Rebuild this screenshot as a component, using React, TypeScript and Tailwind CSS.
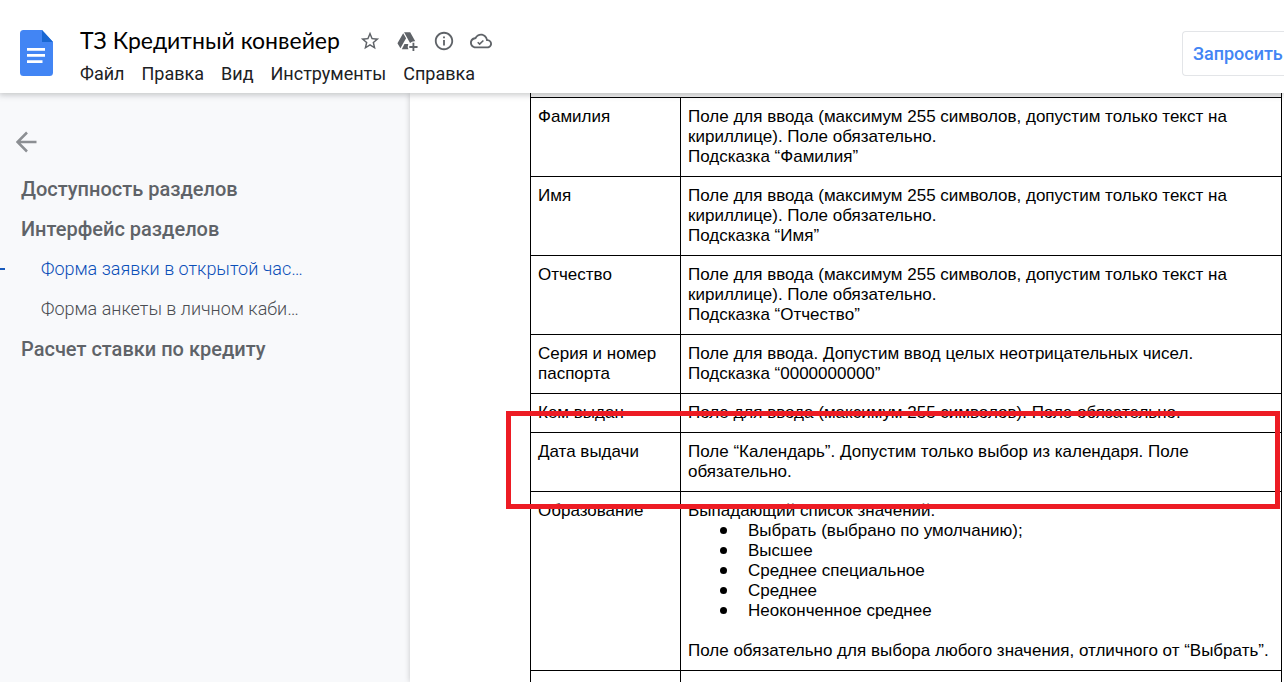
import type { ReactNode } from 'react';

const outline = [
  { text: 'Доступность разделов', level: 1 },
  { text: 'Интерфейс разделов', level: 1 },
  { text: 'Форма заявки в открытой час…', level: 2, active: true },
  { text: 'Форма анкеты в личном каби…', level: 2 },
  { text: 'Расчет ставки по кредиту', level: 1 },
];

const menu = ['Файл', 'Правка', 'Вид', 'Инструменты', 'Справка'];

const options = [
  'Выбрать (выбрано по умолчанию);',
  'Высшее',
  'Среднее специальное',
  'Среднее',
  'Неоконченное среднее',
];

const nameField = (hint: string) => (
  <>
    <p>Поле для ввода (максимум 255 символов, допустим только текст на кириллице). Поле обязательно.</p>
    <p>Подсказка “{hint}”</p>
  </>
);

const rows: { name: string; body: ReactNode }[] = [
  { name: 'Фамилия', body: nameField('Фамилия') },
  { name: 'Имя', body: nameField('Имя') },
  { name: 'Отчество', body: nameField('Отчество') },
  {
    name: 'Серия и номер паспорта',
    body: (
      <>
        <p>Поле для ввода. Допустим ввод целых неотрицательных чисел.</p>
        <p>Подсказка “0000000000”</p>
      </>
    ),
  },
  { name: 'Кем выдан', body: <p>Поле для ввода (максимум 255 символов). Поле обязательно.</p> },
  {
    name: 'Дата выдачи',
    body: <p>Поле “Календарь”. Допустим только выбор из календаря. Поле обязательно.</p>,
  },
  {
    name: 'Образование',
    body: (
      <>
        <p>Выпадающий список значений:</p>
        <ul className="mb-5">
          {options.map((o) => (
            <li key={o} className="flex items-center">
              <span className="mr-[21px] ml-8 size-[7px] rounded-full bg-black" />
              {o}
            </li>
          ))}
        </ul>
        <p>Поле обязательно для выбора любого значения, отличного от “Выбрать”.</p>
      </>
    ),
  },
];

function DocsLogo() {
  return (
    <svg viewBox="0 0 33 46" className="h-[46px] w-[33px]" aria-hidden="true">
      <path d="M3.5 0H22l11 12v30.5a3.5 3.5 0 0 1-3.5 3.5h-26A3.5 3.5 0 0 1 0 42.5v-39A3.5 3.5 0 0 1 3.5 0Z" fill="#4285f4" />
      <path d="M22 0l11 12H22Z" fill="#1967d2" />
      <path d="M7 18h18v2.700H7zM7 24h18v2.700H7zM7 30.300h15.500v2.700H7z" fill="#fff" />
    </svg>
  );
}

const icons = [
  {
    label: 'Пометить',
    d: 'M22 9.240l-7.190-.62L12 2 9.190 8.630 2 9.240l5.460 4.730L5.820 21 12 17.270 18.180 21l-1.630-7.030L22 9.240zM12 15.400l-3.760 2.270 1-4.280-3.320-2.880 4.380-.38L12 6.100l1.710 4.040 4.380.38-3.320 2.880 1 4.280L12 15.400z',
  },
  {
    label: 'Добавить ярлык на Диск',
    d: 'M7.800 3.500 1.600 14.400 4.800 20 11 9.100zM8.800 2.500h6.700l5.500 9.700a7 7 0 0 0-5.700 1.900zM9.300 15.300 6.300 21H13.600a6.500 6.500 0 0 1-.2-5.700zM18 14h2V17.500h3.500v2H20v3.500h-2V19.500h-3.500v-2H18z',
  },
  {
    label: 'Сведения',
    d: 'M11 7h2v2h-2zm0 4h2v6h-2zm1-9C6.480 2 2 6.480 2 12s4.480 10 10 10 10-4.480 10-10S17.520 2 12 2zm0 18c-4.410 0-8-3.590-8-8s3.590-8 8-8 8 3.590 8 8-3.590 8-8 8z',
  },
  {
    label: 'Состояние документа',
    d: 'M19.350 10.040C18.670 6.590 15.640 4 12 4 9.110 4 6.610 5.640 5.360 8.040 2.340 8.360 0 10.910 0 14c0 3.310 2.690 6 6 6h13c2.760 0 5-2.240 5-5 0-2.640-2.050-4.780-4.650-4.960zM19 18H6c-2.210 0-4-1.790-4-4 0-2.050 1.530-3.760 3.560-3.970l1.070-.11.5-.95C8.080 7.140 9.940 6 12 6c2.620 0 4.880 1.860 5.390 4.430l.3 1.500 1.530.11c1.560.1 2.780 1.410 2.780 2.960 0 1.650-1.350 3-3 3zM10.500 14.300l-1.500-1.500L7.800 14l2.700 2.700 4.700-4.700-1.200-1.200z',
  },
];

function Header() {
  return (
    <header className="relative z-20 flex h-[93px] shrink-0 items-start bg-white shadow-[0_1px_6px_1px_rgba(60,64,67,0.28)]">
      <a href="#home" aria-label="Документы" className="ml-5 mt-[30px] shrink-0">
        <DocsLogo />
      </a>
      <div className="ml-[27px] mt-6 shrink-0 font-[Roboto,sans-serif]">
        <div className="flex h-8 items-center">
          <h1 className="font-[Lato,sans-serif] text-[23px] leading-8 text-black">ТЗ Кредитный конвейер</h1>
          <div className="ml-[19px] flex gap-[15px] pt-0.5">
            {icons.map((i) => (
              <button key={i.label} type="button" aria-label={i.label} className="text-[#5f6368]">
                <svg viewBox="0 0 24 24" fill="currentColor" className="size-[22px]">
                  <path d={i.d} fillRule="evenodd" />
                </svg>
              </button>
            ))}
          </div>
        </div>
        <nav className="mt-1 flex gap-[17px] text-lg leading-7 text-[#202124]">
          {menu.map((m) => (
            <button key={m} type="button">{m}</button>
          ))}
        </nav>
      </div>
      <button
        type="button"
        className="mt-[31px] ml-auto h-[45px] w-[102px] shrink-0 rounded-l border border-r-0 border-[#e3e5e8] pl-2.5 text-left font-[Roboto,sans-serif] text-lg font-medium whitespace-nowrap text-[#4285f4]"
      >
        Запросить
      </button>
    </header>
  );
}

function Outline() {
  return (
    <aside className="w-[410px] shrink-0 pt-[38px] font-[Roboto,sans-serif] text-[#5f6368]">
      <button type="button" aria-label="Скрыть структуру" className="ml-4 block text-[#8c8f93]">
        <svg viewBox="0 0 22 22" className="size-[22px]" fill="none" stroke="currentColor" strokeWidth="2.500">
          <path d="M20.500 11H2M11 1.500 1.500 11l9.500 9.500" />
        </svg>
      </button>
      <nav className="mt-4">
        {outline.map((o) => (
          <a
            key={o.text}
            href="#section"
            className={
              o.level === 1
                ? 'block h-10 pl-[21px] text-xl leading-10 font-medium'
                : o.active
                  ? 'flex h-10 items-center text-lg font-light text-[#0b4fb8]'
                  : 'flex h-10 items-center text-lg font-light text-[#4a4d52]'
            }
          >
            {o.level === 2 ? (
              <>
                <span className={o.active ? 'mr-9 h-0.5 w-[5px] bg-[#185abc]' : 'mr-9 h-0.5 w-[5px]'} />
                <span className="whitespace-nowrap">{o.text}</span>
              </>
            ) : (
              o.text
            )}
          </a>
        ))}
      </nav>
    </aside>
  );
}

export default function App() {
  return (
    <div className="flex h-screen flex-col overflow-hidden bg-white pb-0.5">
      <Header />
      <div className="flex min-h-0 flex-1 overflow-hidden bg-[#f8f9fb]">
        <Outline />
        <main className="min-w-0 flex-1 bg-white pr-0.5 pl-[120px] shadow-[0_0_6px_rgba(0,0,0,0.2)]">
          <div className="relative">
            <table className="w-full table-fixed border-collapse font-['Liberation_Sans',sans-serif] text-[17px] leading-5 text-black">
              <colgroup>
                <col className="w-[150px]" />
                <col />
              </colgroup>
              <tbody>
                <tr>
                  <td colSpan={2} className="h-1 border border-t-0 border-black bg-[#efefef] p-0" />
                </tr>
                {rows.map((r) => (
                  <tr key={r.name}>
                    <td className="border border-black px-[7px] py-[9px] align-top">{r.name}</td>
                    <td className="border border-black px-[7px] py-[9px] align-top">{r.body}</td>
                  </tr>
                ))}
                <tr>
                  <td className="h-10 border border-black" />
                  <td className="h-10 border border-black" />
                </tr>
              </tbody>
            </table>
            <div className="pointer-events-none absolute top-[318px] right-0.5 -left-6 h-[98px] border-[5px] border-[#ed1c24]" />
          </div>
        </main>
      </div>
    </div>
  );
}
